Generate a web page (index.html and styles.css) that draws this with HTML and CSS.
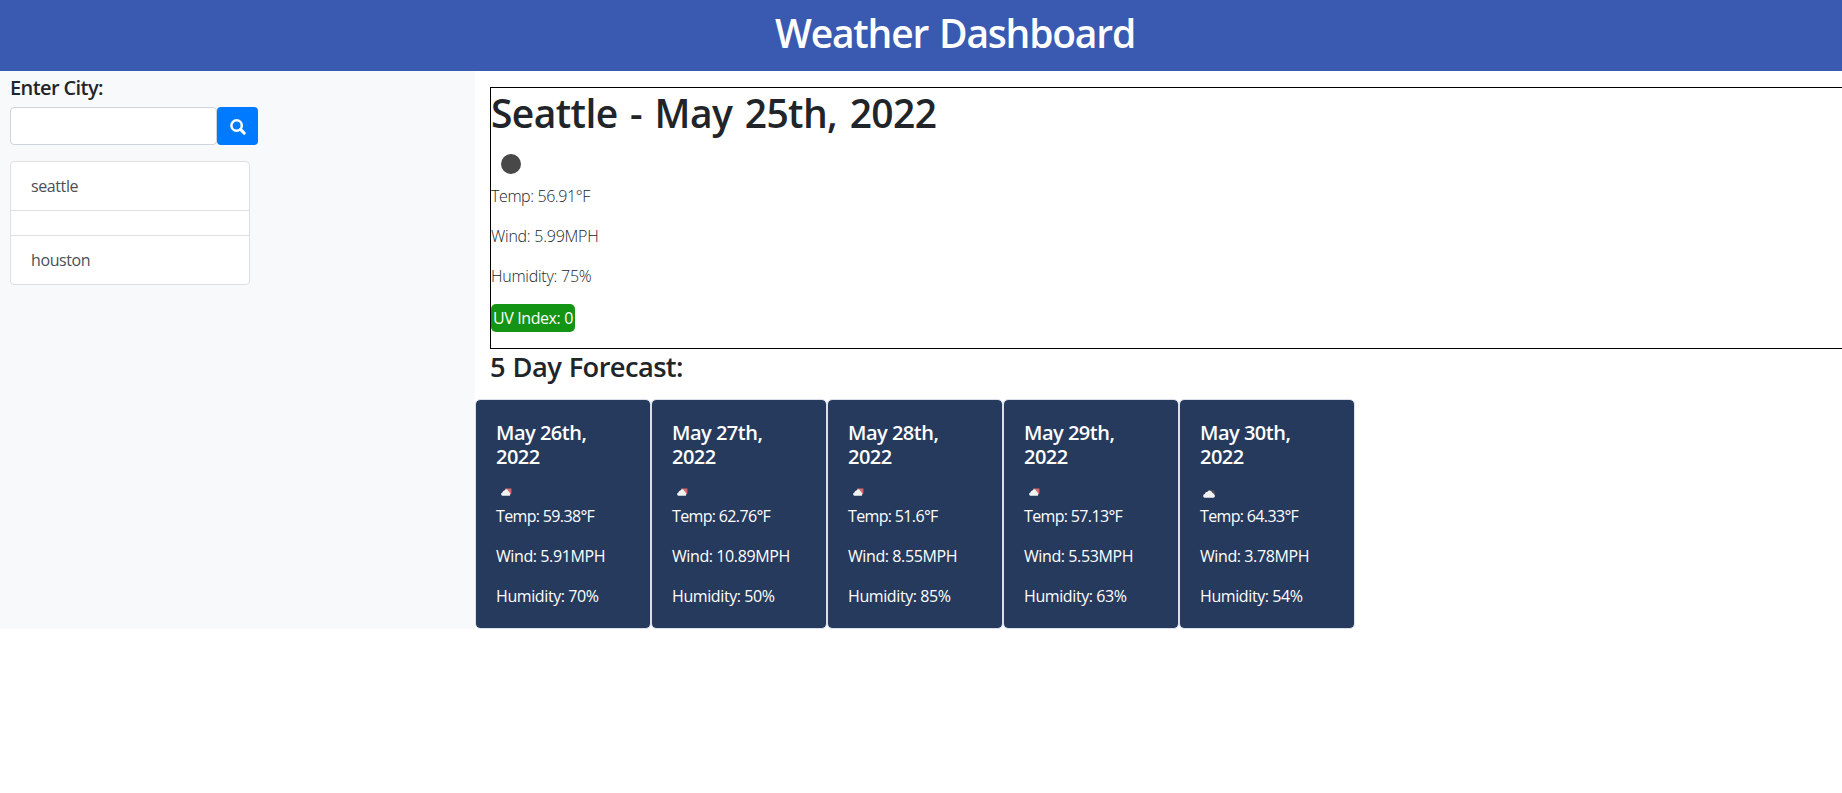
FILE: index.html
```html
<!DOCTYPE html>
<html lang="en">
<head>
<meta charset="utf-8">
<title>Weather Dashboard</title>
<link rel="stylesheet" href="styles.css">
</head>
<body>
<svg width="0" height="0" class="defs" aria-hidden="true">
  <symbol id="cloud" viewBox="0 0 12 8" preserveAspectRatio="none"><path d="M2.400 7.800C1 7.800.2 7 .2 6c0-1 .7-1.800 1.700-1.900C2.200 2.600 3.100 2 4.100 2.100 4.700 1 5.500.4 6.500.4c1.500 0 2.500 1 2.700 2.300 1 .2 1.500.8 1.600 1.600.7.2 1.100.8 1.100 1.600 0 1.100-.8 1.900-2 1.900z" fill="#f2f2f2"/></symbol>
</svg>
<header class="header"><h1 class="title">Weather Dashboard</h1></header>
<main class="layout">
  <aside class="sidebar">
    <h5 class="label">Enter City:</h5>
    <form class="search">
      <input class="field" type="text" aria-label="City">
      <button class="button" type="button" aria-label="Search"><svg width="16" height="16" viewBox="0 0 16 16"><circle cx="6.600" cy="6.500" r="5.200" fill="none" stroke="#fff" stroke-width="2.500"/><path d="M10.500 10.400l3.700 3.700" stroke="#fff" stroke-width="3" stroke-linecap="round"/></svg></button>
    </form>
    <ul class="history"><li class="city">seattle</li><li class="city empty"></li><li class="city">houston</li></ul>
  </aside>
  <section class="content">
    <div class="current">
      <h1 class="place">Seattle - May 25th, 2022</h1>
      <div class="moon-row"><svg width="20" height="20" viewBox="0 0 20 20"><circle cx="10" cy="10" r="10" fill="#484848"/></svg></div>
      <p class="stat temp">Temp: 56.91°F</p>
      <p class="stat">Wind: 5.99MPH</p>
      <p class="stat">Humidity: 75%</p>
      <p class="uv">UV Index: 0</p>
    </div>
    <h3 class="subtitle">5 Day Forecast:</h3>
    <div class="cards">
      <article class="card"><h5 class="date">May 26th, 2022</h5><div class="icon"><svg width="12" height="8" viewBox="0 0 12 8"><path d="M5 .5h6.400v4.900l-2 1.400z" fill="#d9696a"/><use href="#cloud" x="1" y="1" width="9.500" height="7"/></svg></div><p class="temp">Temp: 59.38°F</p><p>Wind: 5.91MPH</p><p>Humidity: 70%</p></article>
      <article class="card"><h5 class="date">May 27th, 2022</h5><div class="icon"><svg width="12" height="8" viewBox="0 0 12 8"><path d="M5 .5h6.400v4.900l-2 1.400z" fill="#d9696a"/><use href="#cloud" x="1" y="1" width="9.500" height="7"/></svg></div><p class="temp">Temp: 62.76°F</p><p>Wind: 10.89MPH</p><p>Humidity: 50%</p></article>
      <article class="card"><h5 class="date">May 28th, 2022</h5><div class="icon"><svg width="12" height="8" viewBox="0 0 12 8"><path d="M5 .5h6.400v4.900l-2 1.400z" fill="#d9696a"/><use href="#cloud" x="1" y="1" width="9.500" height="7"/></svg></div><p class="temp">Temp: 51.6°F</p><p>Wind: 8.55MPH</p><p>Humidity: 85%</p></article>
      <article class="card"><h5 class="date">May 29th, 2022</h5><div class="icon"><svg width="12" height="8" viewBox="0 0 12 8"><path d="M5 .5h6.400v4.900l-2 1.400z" fill="#d9696a"/><use href="#cloud" x="1" y="1" width="9.500" height="7"/></svg></div><p class="temp">Temp: 57.13°F</p><p>Wind: 5.53MPH</p><p>Humidity: 63%</p></article>
      <article class="card"><h5 class="date">May 30th, 2022</h5><div class="icon"><svg class="cloudy" width="13" height="9" viewBox="0 0 13 9"><circle cx="9.500" cy="3.500" r="2.800" fill="#454a55"/><use href="#cloud" x="0" y="1" width="12" height="8"/></svg></div><p class="temp">Temp: 64.33°F</p><p>Wind: 3.78MPH</p><p>Humidity: 54%</p></article>
    </div>
  </section>
</main>
</body>
</html>
```
FILE: styles.css
```css
* { box-sizing: border-box; }
body { margin: 0; overflow: hidden; background: #fff; color: #212529; font: 400 16px/24px "Open Sans", "Noto Sans", sans-serif; letter-spacing: -0.4px; }
h1, h3, h5, p, ul { margin: 0; padding: 0; }
h1, h3, h5 { font-weight: 600; }
.defs { display: none; }
.header { height: 71px; padding: 9px 0 0 68px; background: #3a59b1; color: #fff; text-align: center; }
.title, .place { font-size: 39px; line-height: 48px; }
.title { letter-spacing: -1.2px; word-spacing: 2px; }
.place { padding-top: 1px; letter-spacing: -0.6px; word-spacing: 3px; }
.layout { display: flex; }
.sidebar { flex: 0 0 475px; height: 558px; padding: 5px 10px 0; background: #f8f9fb; }
.label { font-size: 20px; line-height: 24px; letter-spacing: -0.6px; }
.search { display: flex; margin: 7px 0 16px; }
.field { width: 207px; height: 38px; border: 1px solid #ced4da; border-radius: 4px; background: #fff; }
.button { display: flex; align-items: center; justify-content: center; width: 41px; height: 38px; padding: 2px 0 0; border: 0; border-radius: 4px; background: #007bff; }
.history { width: 240px; border: 1px solid #dfdfdf; border-radius: 4px; background: #fff; list-style: none; color: #495057; }
.city { height: 49px; padding: 12px 20px; border-bottom: 1px solid #dfdfdf; }
.empty { height: 25px; }
.city:last-child { height: 48px; border-bottom: 0; }
.content { flex: 1; min-width: 0; }
.current { height: 262px; margin: 16px 0 0 15px; border: 1px solid #000; border-right: 0; }
.moon-row { height: 47px; padding: 17px 0 0 10px; }
.moon-row svg { display: block; }
.stat { margin-bottom: 16px; font-weight: 350; letter-spacing: -0.25px; }
.current .temp { letter-spacing: -0.4px; }
.uv { width: 84px; height: 28px; padding: 2px; border-radius: 5px; background: #149414; color: #fff; white-space: nowrap; }
.subtitle { height: 50px; padding: 1px 0 0 15px; font-size: 27.3px; line-height: 34px; letter-spacing: -0.6px; word-spacing: 1px; }
.cards { display: flex; }
.card { width: 176px; height: 230px; padding: 21px 20px 0; border: 1px solid #dbdfea; border-radius: 5px; background: #263a5d; background-clip: padding-box; color: #fff; }
.card p { margin-bottom: 16px; }
.card .temp { letter-spacing: -0.65px; }
.date { font-size: 20px; line-height: 24px; font-weight: 650; letter-spacing: -0.5px; }
.icon { height: 35px; padding: 19px 0 0 4px; }
.icon svg { display: block; }
.icon .cloudy { margin: 1px 0 0 -1px; }
```
